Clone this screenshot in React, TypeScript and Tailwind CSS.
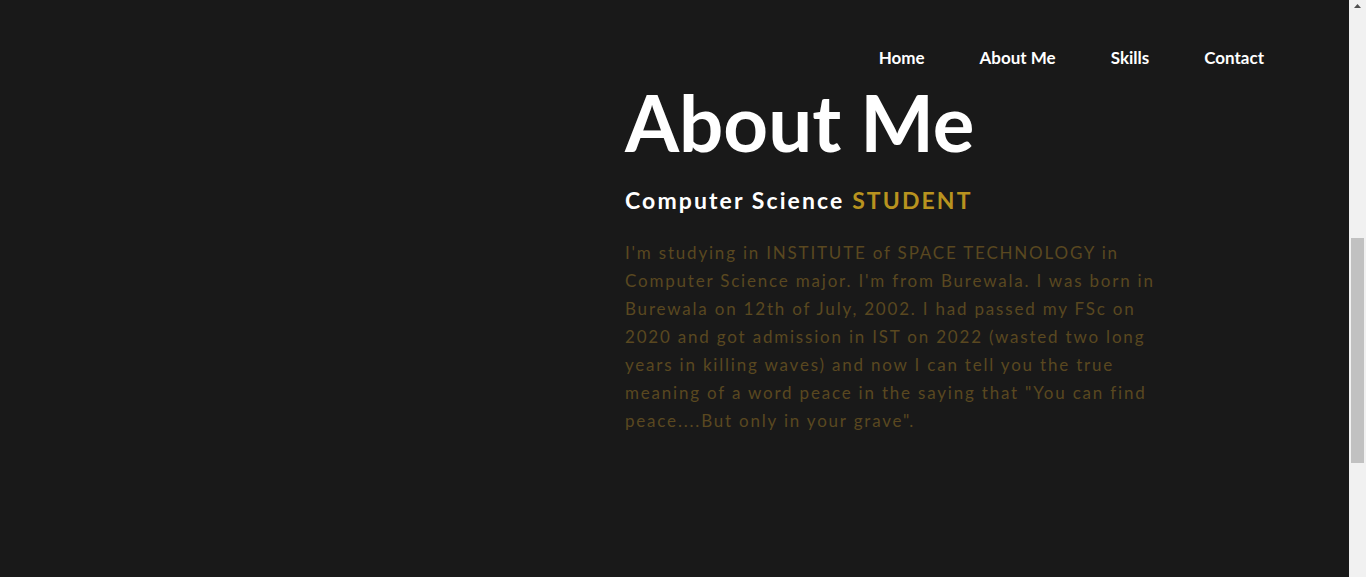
import React from "react";

const lines = [
  "I'm studying in INSTITUTE of SPACE TECHNOLOGY in",
  "Computer Science major. I'm from Burewala. I was born in",
  "Burewala on 12th of July, 2002. I had passed my FSc on",
  "2020 and got admission in IST on 2022 (wasted two long",
  "years in killing waves) and now I can tell you the true",
  'meaning of a word peace in the saying that "You can find',
  'peace....But only in your grave".',
];

const navItems = ["Home", "About Me", "Skills", "Contact"];

// fake browser scrollbar, the page is scrolled down a bit in the shot
const ScrollBar = () => (
  <div className="w-[17px] shrink-0 bg-[#f1f1f1] flex flex-col items-center">
    <svg width="17" height="14" viewBox="0 0 17 14" className="shrink-0">
      <path d="M5 8 L8.5 4 L12 8 Z" fill="#505050" />
    </svg>
    <div className="mt-[224px] w-[13px] h-[225px] bg-[#c1c1c1]" />
  </div>
);

const App = () => {
  return (
    <div
      className="flex h-[577px] w-full overflow-hidden"
      style={{ fontFamily: "Lato, 'Noto Sans', sans-serif" }}
    >
      <div className="flex-1 bg-[#191919] flex flex-col">
        {/* Navbar */}
        <header className="flex justify-end pt-[46px] pr-[85px]">
          <nav className="flex gap-[55px]">
            {navItems.map((item) => (
              <a
                key={item}
                href="#"
                className="text-[17px] leading-[24px] font-bold text-white"
              >
                {item}
              </a>
            ))}
          </nav>
        </header>

        {/* About section */}
        <section className="grid grid-cols-[625px_1fr] mt-[13px]">
          <div />
          <div>
            <h1 className="text-[78px] leading-[78px] font-bold text-white">
              About Me
            </h1>
            <h3 className="mt-[23px] text-[23px] leading-[32px] font-bold tracking-[2.1px] text-white">
              Computer Science{" "}
              <span className="text-[#b8931f]">STUDENT</span>
            </h3>
            <p className="mt-[23px] text-[17px] leading-[28px] tracking-[1.8px] text-[#5a4820]">
              {lines.map((l) => (
                <span key={l} className="block whitespace-nowrap">
                  {l}
                </span>
              ))}
            </p>
          </div>
        </section>
      </div>
      <ScrollBar />
    </div>
  );
};

export default App;
